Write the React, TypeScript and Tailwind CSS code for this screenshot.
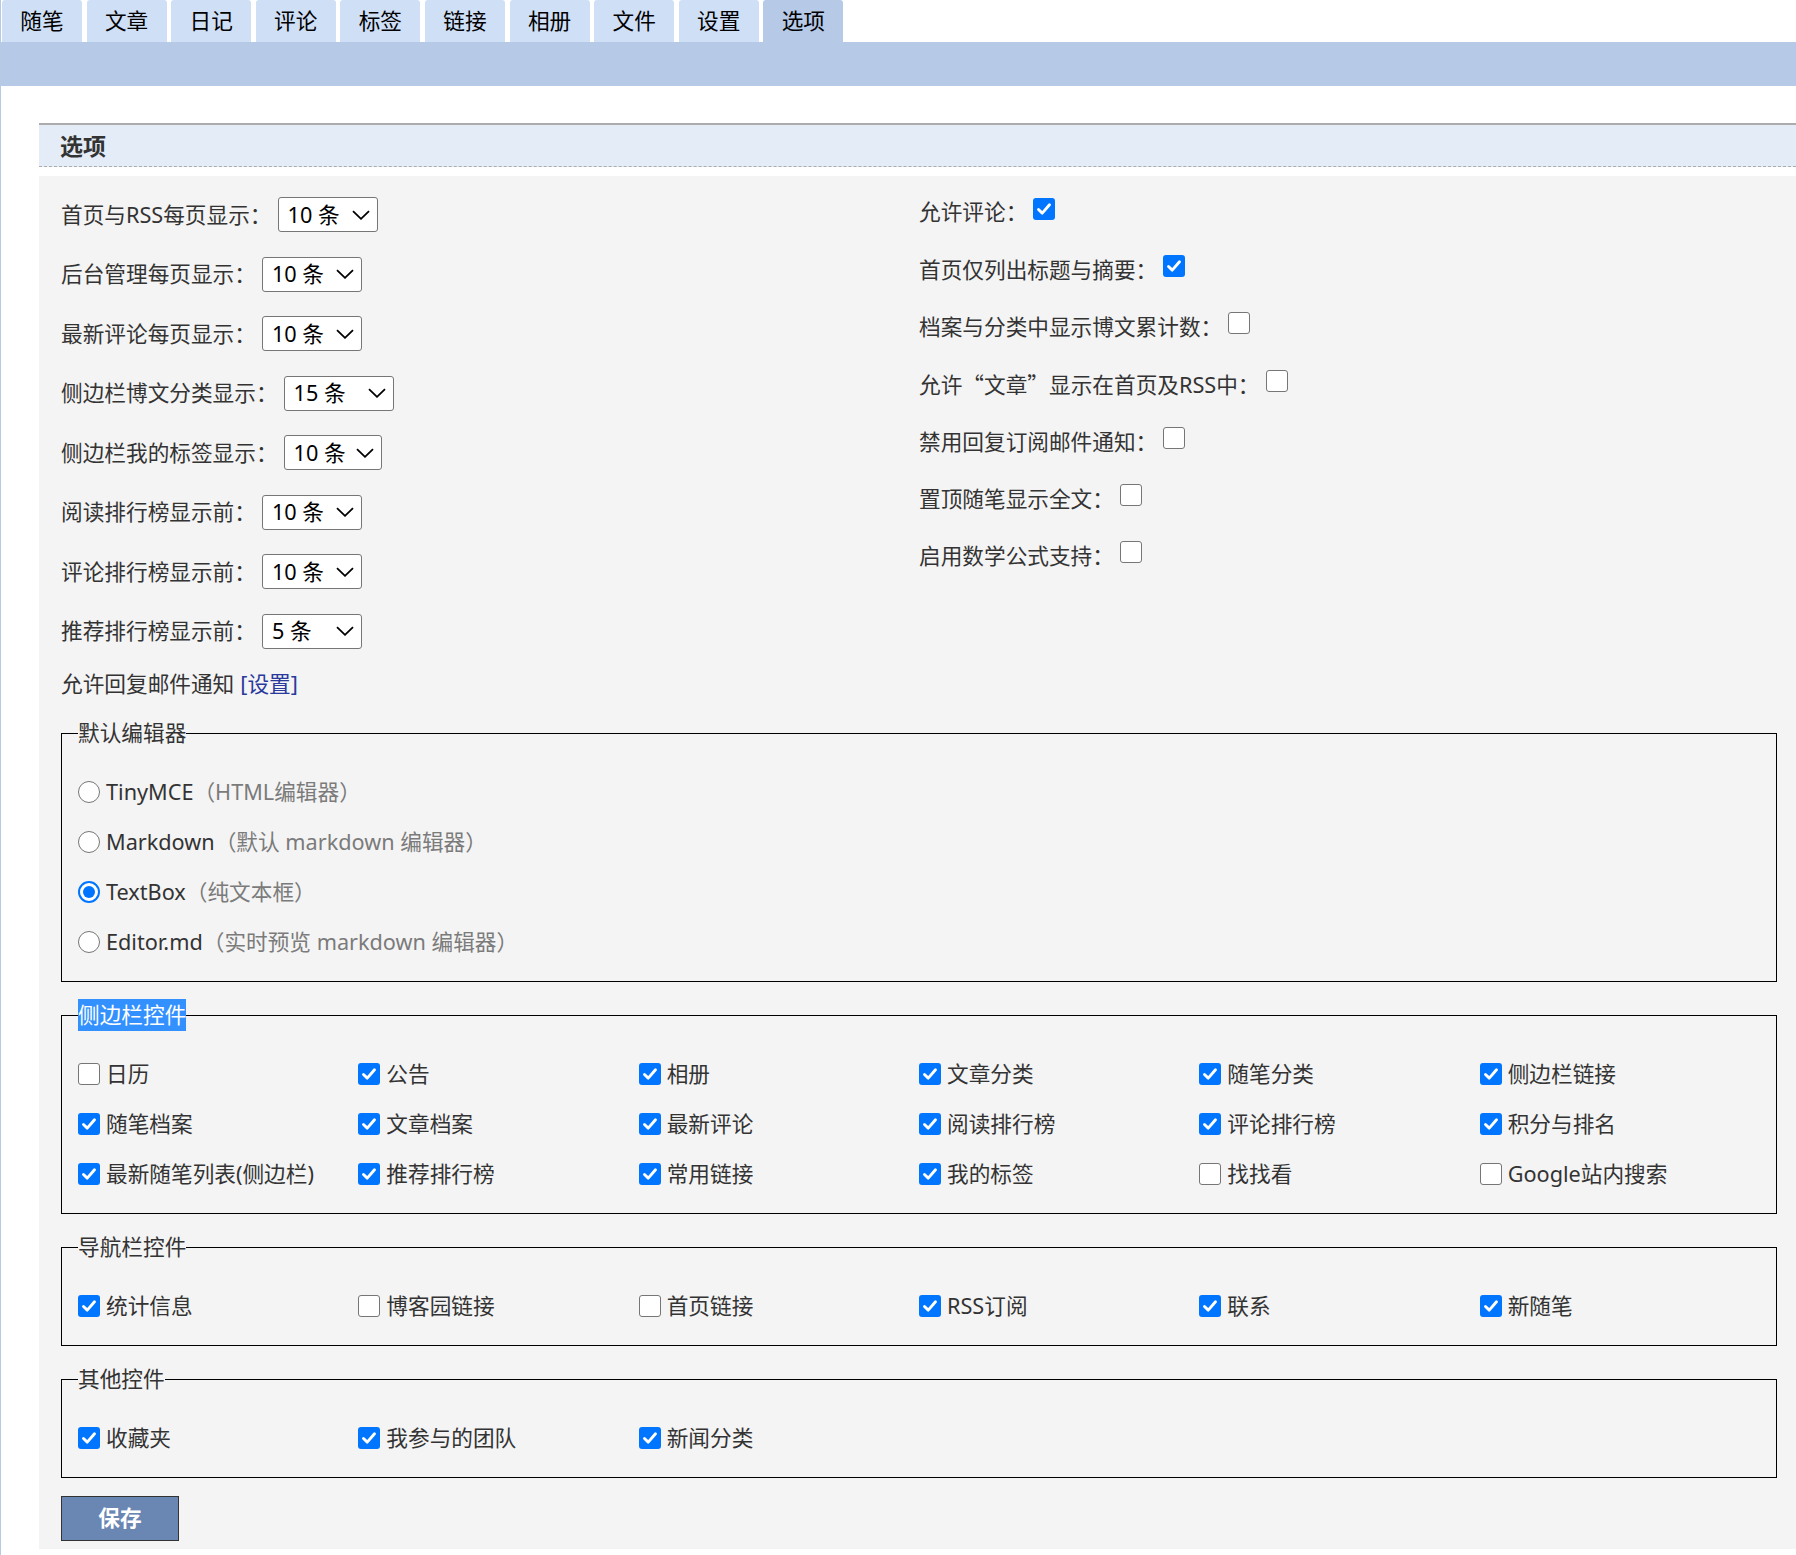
import React from 'react';

const tabs = ['随笔', '文章', '日记', '评论', '标签', '链接', '相册', '文件', '设置', '选项'];

const selects = [
  { label: '首页与RSS每页显示：', value: '10 条', w: 'w-[100px]' },
  { label: '后台管理每页显示：', value: '10 条', w: 'w-[100px]' },
  { label: '最新评论每页显示：', value: '10 条', w: 'w-[100px]' },
  { label: '侧边栏博文分类显示：', value: '15 条', w: 'w-[110px]' },
  { label: '侧边栏我的标签显示：', value: '10 条', w: 'w-[98px]' },
  { label: '阅读排行榜显示前：', value: '10 条', w: 'w-[100px]' },
  { label: '评论排行榜显示前：', value: '10 条', w: 'w-[100px]' },
  { label: '推荐排行榜显示前：', value: '5 条', w: 'w-[100px]' },
];

const toggles: [React.ReactNode, boolean][] = [
  ['允许评论：', true],
  ['首页仅列出标题与摘要：', true],
  ['档案与分类中显示博文累计数：', false],
  [
    <>
      允许<span className="font-['Noto_Sans_CJK_SC',sans-serif]">“</span>文章
      <span className="font-['Noto_Sans_CJK_SC',sans-serif]">”</span>显示在首页及RSS中：
    </>,
    false,
  ],
  ['禁用回复订阅邮件通知：', false],
  ['置顶随笔显示全文：', false],
  ['启用数学公式支持：', false],
];

const editors = [
  { name: 'TinyMCE', desc: '（HTML编辑器）', on: false },
  { name: 'Markdown', desc: '（默认 markdown 编辑器）', on: false },
  { name: 'TextBox', desc: '（纯文本框）', on: true },
  { name: 'Editor.md', desc: '（实时预览 markdown 编辑器）', on: false },
];

const sidebar: [string, boolean][] = [
  ['日历', false], ['公告', true], ['相册', true], ['文章分类', true], ['随笔分类', true], ['侧边栏链接', true],
  ['随笔档案', true], ['文章档案', true], ['最新评论', true], ['阅读排行榜', true], ['评论排行榜', true], ['积分与排名', true],
  ['最新随笔列表(侧边栏)', true], ['推荐排行榜', true], ['常用链接', true], ['我的标签', true], ['找找看', false], ['Google站内搜索', false],
];

const navbar: [string, boolean][] = [
  ['统计信息', true], ['博客园链接', false], ['首页链接', false], ['RSS订阅', true], ['联系', true], ['新随笔', true],
];

const others: [string, boolean][] = [
  ['收藏夹', true], ['我参与的团队', true], ['新闻分类', true],
];

function Box({ on, className = '' }: { on: boolean; className?: string }) {
  if (!on) {
    return <span className={`block h-[22px] w-[22px] shrink-0 rounded-[3px] border border-[#767676] bg-white ${className}`} />;
  }
  return (
    <span className={`flex h-[22px] w-[22px] shrink-0 items-center justify-center rounded-[3px] bg-[#0075ff] ${className}`}>
      <svg viewBox="0 0 16 16" className="h-[20px] w-[20px]">
        <path d="M3.6 8.4 6.6 11.3 12.4 4.6" fill="none" stroke="#fff" strokeWidth="2.3" strokeLinecap="round" strokeLinejoin="round" />
      </svg>
    </span>
  );
}

function Radio({ on }: { on: boolean }) {
  if (!on) return <span className="block h-[22px] w-[22px] shrink-0 rounded-full border border-[#767676] bg-white" />;
  return (
    <span className="flex h-[22px] w-[22px] shrink-0 items-center justify-center rounded-full border-2 border-[#0075ff] bg-white">
      <span className="h-[12px] w-[12px] rounded-full bg-[#0075ff]" />
    </span>
  );
}

function Select({ value, w }: { value: string; w: string }) {
  return (
    <div className={`ml-[6px] flex h-[35px] ${w} items-center justify-between rounded-[3px] border border-[#767676] bg-white pl-[9px] pr-[7px] text-black`}>
      <span>{value}</span>
      <svg viewBox="0 0 18 10" className="h-[10px] w-[18px]">
        <path d="M1 1.2 9 8.8 17 1.2" fill="none" stroke="#000" strokeWidth="1.8" />
      </svg>
    </div>
  );
}

function Group({ title, selected, children, className = '' }: { title: string; selected?: boolean; children: React.ReactNode; className?: string }) {
  return (
    <fieldset className={`border border-[#000] px-[16px] pb-[14px] ${className}`}>
      <legend className={`leading-[32px] ${selected ? 'bg-[#3390ff] text-white' : ''}`}>{title}</legend>
      <div className="pt-[18px]">{children}</div>
    </fieldset>
  );
}

function CheckGrid({ items }: { items: [string, boolean][] }) {
  return (
    <div className="grid grid-cols-6">
      {items.map(([label, on]) => (
        <label key={label} className="flex h-[50px] items-center">
          <Box on={on} />
          <span className="ml-[6px]">{label}</span>
        </label>
      ))}
    </div>
  );
}

const App: React.FC = () => {
  return (
    <div className="min-h-screen border-l border-[#b8c9e6] bg-white font-['Noto_Sans','Noto_Sans_CJK_SC',sans-serif] text-[21.67px] text-[#333]">
      {/* Top tabs */}
      <nav className="flex h-[42px] gap-[4.6px] pl-[1px]">
        {tabs.map((t) => (
          <div
            key={t}
            className={`flex w-[80px] items-center justify-center rounded-t-[3px] text-black ${t === '选项' ? 'bg-[#b6c9e7]' : 'bg-[#cfdff6]'}`}
          >
            {t}
          </div>
        ))}
      </nav>
      <div className="h-[44px] bg-[#b6c9e7]" />

      <div className="ml-[38px] mt-[37px]">
        {/* Section header */}
        <div className="flex h-[44px] items-center border-t-2 border-b border-[#acacac] bg-[#e4ecf7] pl-[21px] pt-[2px] text-[23px] font-bold [border-bottom-style:dashed]">
          选项
        </div>

        {/* Panel */}
        <div className="mt-[9px] bg-[#f4f4f4] pb-[8px] pl-[22px] pr-[19px] pt-[9px]">
          <div className="grid grid-cols-2">
            <div>
              {selects.map((s) => (
                <div key={s.label} className="flex h-[59.5px] items-center">
                  <span>{s.label}</span>
                  <Select value={s.value} w={s.w} />
                </div>
              ))}
              <div className="flex h-[46px] items-center">
                允许回复邮件通知 <span className="ml-[6px] text-[#2a3a9c]">[设置]</span>
              </div>
            </div>
            <div className="-mt-[1px]">
              {toggles.map(([label, on], i) => (
                <div key={i} className="flex h-[57.3px] items-center">
                  <span>{label}</span>
                  <Box on={on} className="mb-[8px] ml-[6px]" />
                </div>
              ))}
            </div>
          </div>

          <Group title="默认编辑器" className="mt-[10px]">
            {editors.map((e) => (
              <label key={e.name} className="flex h-[50px] items-center">
                <Radio on={e.on} />
                <span className="ml-[6px]">{e.name}</span>
                <span className="text-[#7b7b7b]">{e.desc}</span>
              </label>
            ))}
          </Group>

          <Group title="侧边栏控件" selected className="mt-[17px]">
            <CheckGrid items={sidebar} />
          </Group>

          <Group title="导航栏控件" className="mt-[17px]">
            <CheckGrid items={navbar} />
          </Group>

          <Group title="其他控件" className="mt-[17px]">
            <CheckGrid items={others} />
          </Group>

          <button className="mt-[18px] h-[45px] w-[118px] border border-[#333] bg-[#6a86b3] text-[21.67px] font-bold text-white">
            保存
          </button>
        </div>
      </div>
    </div>
  );
};

export default App;
